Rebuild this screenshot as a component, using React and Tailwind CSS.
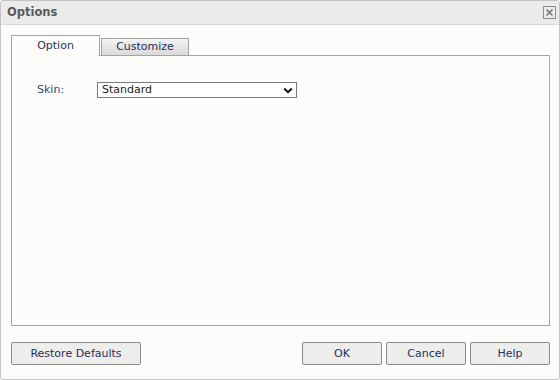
export default function App() {
  const font = { fontFamily: "'DejaVu Sans', Tahoma, 'Liberation Sans', sans-serif" };

  return (
    <div
      className="w-[560px] h-[380px] flex flex-col border border-[#c4c4c4] rounded-[3px] bg-[#fcfdfb] text-[11px] overflow-hidden"
      style={font}
    >
      {/* Title bar */}
      <div className="h-[24px] shrink-0 flex items-center justify-between bg-[#ebebea] border-b border-[#d6d6d6] pl-[6px] pr-[3px]">
        <span className="font-bold text-[11.5px] text-[#5a5a5a] pt-[1px]">Options</span>
        <div className="w-[13px] h-[13px] border border-[#8c8c8c] flex items-center justify-center">
          <svg width="9" height="9" viewBox="0 0 9 9">
            <path d="M1.5 1.5 L7.5 7.5 M7.5 1.5 L1.5 7.5" stroke="#6f6f6f" strokeWidth="1.4" />
          </svg>
        </div>
      </div>

      {/* Body */}
      <div className="flex-1 flex flex-col pl-[10px] pr-[9px] pt-[10px] pb-[14px]">
        {/* Tabs */}
        <div className="h-[20px] flex items-end shrink-0">
          <div className="relative z-10 -mb-px w-[89px] h-[21px] border border-b-0 border-[#a4a4a4] bg-[#fcfdfb] flex items-center justify-center pt-[1px] text-[#25305a]">
            Option
          </div>
          <div className="ml-px w-[88px] h-[17px] border border-b-0 border-[#a4a4a4] bg-gradient-to-b from-[#f4f4f4] to-[#d9d9d9] flex items-center justify-center text-[#25305a]">
            Customize
          </div>
        </div>

        {/* Panel */}
        <div className="flex-1 border border-[#a4a4a4] pl-[25px] pt-[26px]">
          <div className="flex items-center">
            <span className="w-[60px] text-[#1f4c7a]">Skin:</span>
            <div className="w-[200px] h-[16px] border border-[#7a7a7a] bg-white flex items-center justify-between pl-[4px] pr-[3px] text-[#1a1a1a]">
              <span>Standard</span>
              <svg width="10" height="7" viewBox="0 0 10 7">
                <path d="M1.2 1.5 L5 5.2 L8.8 1.5" fill="none" stroke="#111" strokeWidth="2" />
              </svg>
            </div>
          </div>
        </div>

        {/* Footer buttons */}
        <div className="mt-[16px] flex items-center shrink-0">
          <button className="w-[130px] h-[23px] pt-[2px] border border-[#8a8a8a] rounded-[2px] bg-[#ededec] text-[#25305a]">
            Restore Defaults
          </button>
          <div className="ml-auto flex gap-[4px]">
            <button className="w-[80px] h-[23px] pt-[2px] border border-[#8a8a8a] rounded-[2px] bg-[#ededec] text-[#25305a]">
              OK
            </button>
            <button className="w-[80px] h-[23px] pt-[2px] border border-[#8a8a8a] rounded-[2px] bg-[#ededec] text-[#25305a]">
              Cancel
            </button>
            <button className="w-[80px] h-[23px] pt-[2px] border border-[#8a8a8a] rounded-[2px] bg-[#ededec] text-[#25305a]">
              Help
            </button>
          </div>
        </div>
      </div>
    </div>
  );
}
